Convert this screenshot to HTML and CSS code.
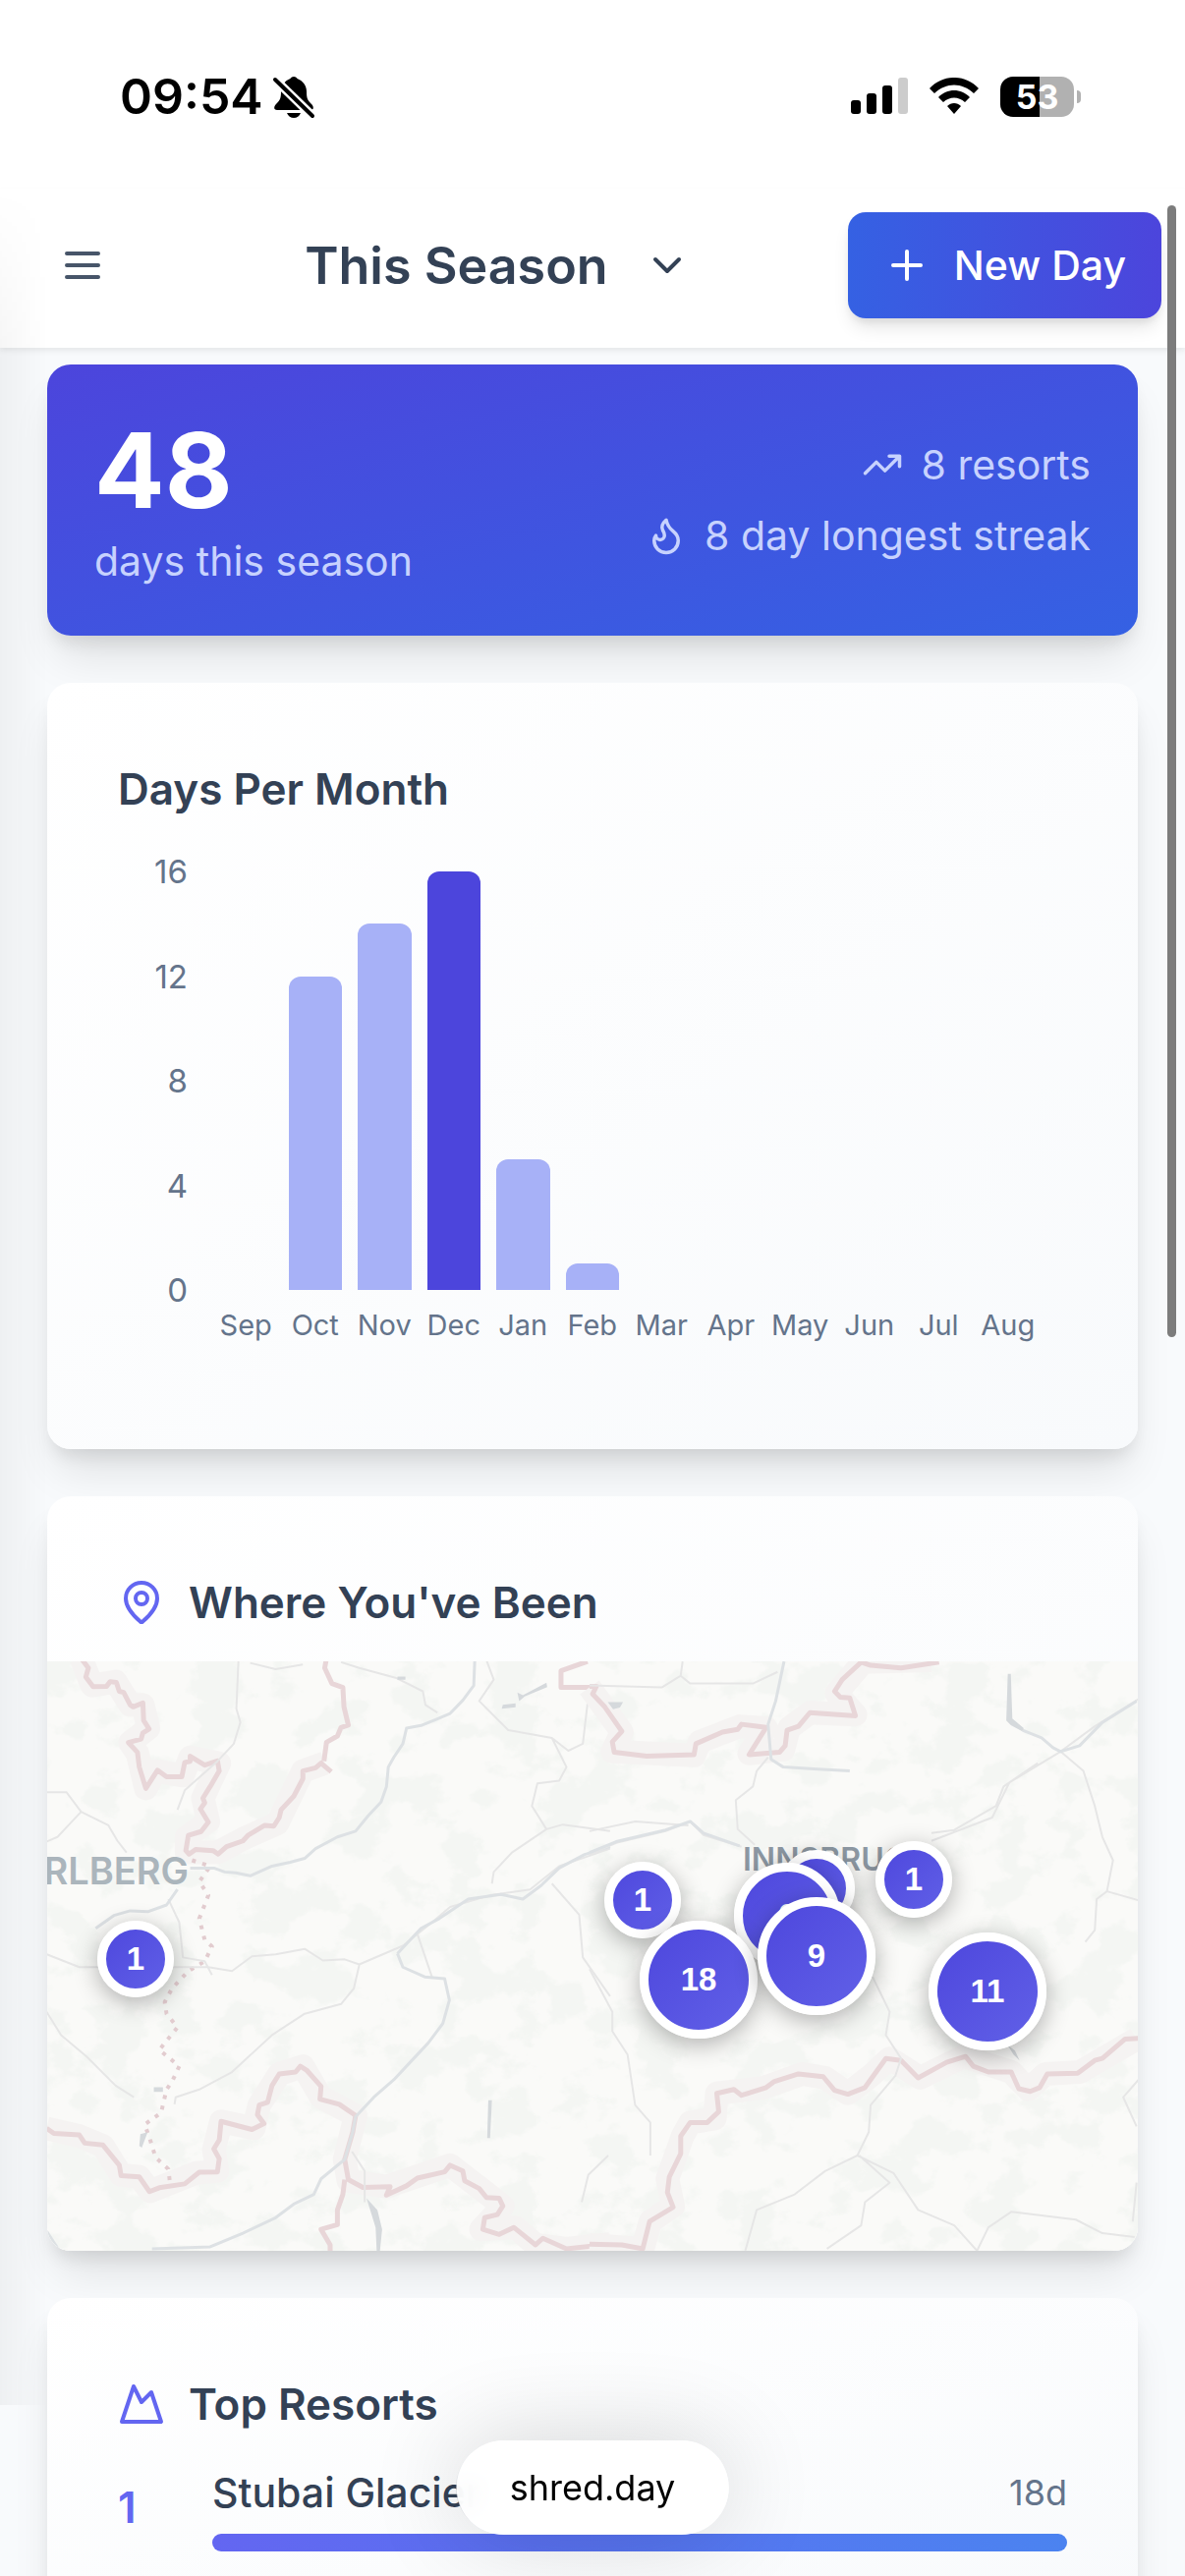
FILE: index.html
```
<!DOCTYPE html>
<html lang="en">
<head>
    <meta charset="UTF-8">
    <meta name="viewport" content="width=device-width, initial-scale=1.0">
    <title>shred.day</title>
    <link rel="stylesheet" href="styles.css">
</head>
<body>
    <div class="status-bar">
        <div class="status-left">
            <span class="clock">09:54</span>
            <svg class="bell" viewBox="0 0 42 42" aria-hidden="true">
                <path d="M21 1c-2 0-3 1-3.500 2C12 5 8 10 8 16c0 7-1 9-5 13-3 3-2 6 1 6h34c3 0 4-3 1-6-4-4-5-6-5-13 0-6-4-11-9.500-13C24 2 23 1 21 1z"/>
                <path d="M14 38h14c-1 3-4 5-7 5s-6-2-7-5z"/>
                <path class="bell-gap" d="M2 4l38 37"/>
                <path class="bell-slash" d="M2 4l38 37"/>
            </svg>
        </div>
        <div class="status-right">
            <svg class="signal" viewBox="0 0 58 38" aria-hidden="true">
                <rect x="0" y="23" width="10" height="14" rx="3"/>
                <rect x="16" y="16" width="10" height="21" rx="3"/>
                <rect x="32" y="8" width="10" height="29" rx="3"/>
                <rect class="dim" x="48" y="0" width="10" height="37" rx="3"/>
            </svg>
            <svg class="wifi" viewBox="0 0 50 38" aria-hidden="true">
                <path d="M0 11C14-3.700 36-3.700 50 11l-5 5C33 4.500 17 4.500 5 16z"/>
                <path d="M9 20c9-9.300 23-9.300 32 0l-5 5c-6.500-6-15.500-6-22 0z"/>
                <path d="M18 29c4-4 10-4 14 0l-7 8z"/>
            </svg>
            <div class="battery"><span>53</span></div>
        </div>
    </div>

    <header class="topbar">
        <button class="icon-button" aria-label="Menu">
            <svg class="icon" viewBox="0 0 24 24"><path d="M4 6h16M4 12h16M4 18h16"/></svg>
        </button>
        <button class="season">
            This Season
            <svg class="icon" viewBox="0 0 24 24"><path d="M6 9l6 6 6-6"/></svg>
        </button>
        <button class="new-day">
            <svg class="icon" viewBox="0 0 24 24"><path d="M5 12h14M12 5v14"/></svg>
            New Day
        </button>
    </header>

    <main>
        <section class="summary">
            <div>
                <div class="total">48</div>
                <div class="label">days this season</div>
            </div>
            <div class="facts">
                <div class="fact">
                    <svg class="icon" viewBox="0 0 24 24"><path d="M22 7l-8.500 8.500-5-5L2 17M16 7h6v6"/></svg>
                    8 resorts
                </div>
                <div class="fact">
                    <svg class="icon" viewBox="0 0 24 24"><path d="M8.500 14.500A2.500 2.500 0 0 0 11 12c0-1.380-.5-2-1-3-1.072-2.143-.224-4.054 2-6 .5 2.500 2 4.900 4 6.500 2 1.600 3 3.500 3 5.500a7 7 0 1 1-14 0c0-1.153.433-2.294 1-3a2.500 2.500 0 0 0 2.500 2.500z"/></svg>
                    8 day longest streak
                </div>
            </div>
        </section>

        <section class="card months">
            <h2>Days Per Month</h2>
            <div class="chart">
                <div class="y-axis">
                    <span>16</span><span>12</span><span>8</span><span>4</span><span>0</span>
                </div>
                <div class="bars" id="bars"></div>
                <div class="x-axis" id="xAxis"></div>
            </div>
        </section>

        <section class="card places">
            <h2>
                <svg class="icon" viewBox="0 0 24 24"><path d="M20 10c0 4.993-5.539 10.193-7.399 11.799a1 1 0 0 1-1.202 0C9.539 20.193 4 14.993 4 10a8 8 0 0 1 16 0"/><circle cx="12" cy="10" r="3"/></svg>
                Where You've Been
            </h2>
            <div class="map">
                <svg class="terrain" viewBox="0 0 1110 600" preserveAspectRatio="none" aria-hidden="true">
                    <defs>
                        <filter id="relief" x="0" y="0" width="100%" height="100%" color-interpolation-filters="sRGB">
                            <feTurbulence type="fractalNoise" baseFrequency="0.02 0.026" numOctaves="6" seed="4"/>
                            <feColorMatrix values="0 0 0 0 0.957  0 0 0 0 0.965  0 0 0 0 0.953  10 0 0 0 -5"/>
                        </filter>
                    </defs>
                    <rect width="1110" height="600" filter="url(#relief)"/>

                    <!-- western half -->
                    <g transform="translate(-8 -11) scale(.37 .3954)">
                        <g class="border-halo">
                            <path d="M115 20L145 90 210 80 250 140 285 140 300 200 250 237 270 265 293 355 320 310 395 322 415 275 495 290 450 380 465 440 405 480 405 520 490 520 560 485 655 445 725 310 785 290"/>
                            <path d="M20 1230L110 1250 175 1275 225 1350 275 1355 305 1392 430 1345 490 1340 480 1285 500 1212 590 1230 605 1170 660 1090 725 1070 775 1150 870 1197 840 1310 850 1365 955 1380 1050 1350 1130 1325 1200 1375 1275 1430 1215 1490 1310 1485 1365 1530 1450 1540 1570 1528"/>
                        </g>
                        <g class="border">
                            <path d="M115 20L135 45 128 68 148 93 185 92 195 80 212 82 220 105 232 108 250 140 258 145 285 135 287 180 302 202 285 212 280 228 245 237 270 262 275 300 293 355 325 308 350 325 392 325 400 288 415 285 415 272 455 295 490 284 495 310 470 350 450 380 455 392 443 408 465 442 445 466 410 476 403 515 412 524 430 512 478 515 492 524 515 505 560 490 575 475 620 450 645 452 660 430 665 410 700 375 725 330 725 310 760 302 775 290 803 312M790 20L785 45 805 85 835 95 838 145 850 192 830 198 820 220 790 236 783 285"/>
                            <path d="M20 1230L40 1243 110 1247 125 1268 175 1273 220 1325 225 1352 275 1355 303 1393 330 1383 400 1373 440 1343 490 1342 495 1308 480 1283 495 1260 500 1212 585 1233 618 1218 600 1195 605 1170 628 1163 640 1120 660 1090 705 1085 718 1070 735 1080 775 1122 772 1155 825 1168 870 1197 862 1240 840 1310 850 1362 890 1382 965 1380 955 1402 1010 1378 1040 1358 1115 1342 1130 1325 1165 1340 1170 1365 1210 1385 1230 1408 1265 1410 1275 1430 1260 1452 1225 1460 1220 1490 1265 1503 1305 1485 1365 1530 1385 1513 1450 1540 1570 1528M840 1362L835 1400 820 1440 820 1478 775 1490 800 1530 800 1560"/>
                            <path d="M1508 28L1435 52 1435 95 1530 95 1520 115 1560 150 1575 170"/>
                        </g>
                        <path class="district" d="M420 540L470 555 440 595 465 630 440 690 455 745 475 762 455 800 410 825 365 870 345 905 350 935 380 970 330 1028 385 1070 365 1110 350 1130 335 1190 290 1220 305 1260 320 1305 355 1335 360 1375"/>
                        <g class="road">
                            <path d="M20 365L75 365 115 415 190 450 215 490 240 520M115 415L75 455 50 480 20 492M548 20L542 150 553 185 535 240 490 285 400 360 380 410M580 32L650 48 725 36M830 30L880 45 980 70 1055 105 1062 140 1095 160M1230 25L1250 75 1210 130 1290 205 1410 225 1455 258 1495 240 1510 120M1410 225L1450 300 1430 335 1370 342 1355 400 1395 460 1440 448 1570 465M1395 460L1300 520 1250 570 1245 600"/>
                            <path d="M20 782L110 815 465 815 530 825 585 787 650 782 730 768 780 798 840 795 880 808 1000 760 1080 700 1130 660 1240 630 1350 615 1430 555 1570 510M355 640L385 700 395 790 455 800 475 835M880 810L865 870 830 910 730 935 640 990 530 1085 440 1130 375 1150 372 1168M20 930L60 990 130 1045 210 1120 260 1150M1040 730L1080 840M1410 600L1485 680 1495 790 1570 890M860 1290L895 1340 895 1420M1565 1300L1510 1350 1492 1420"/>
                        </g>
                        <g class="river">
                            <path d="M1198 20L1195 90 1165 128 1130 162 1090 178 1050 193 1010 200 1000 240 975 275 960 300 955 350 940 390 905 425 870 465 820 480 760 510 730 535 690 545 640 555 580 580 540 572 510 570 480 560 415 560M155 715L205 682 250 670 300 672 350 655 380 615M985 780L1000 815 1060 840 1115 845 1128 900 1110 960 1070 1010 1020 1060 975 1105 920 1150 870 1200 862 1240 840 1310 775 1360 755 1400 700 1425 650 1460 560 1500 470 1535 310 1540M985 780L1050 715 1100 690 1180 640 1270 628 1330 640 1380 605 1430 560 1500 525 1570 505"/>
                            <path d="M20 1495L55 1545"/>
                        </g>
                        <path class="lake" d="M1315 108L1330 115 1395 83 1397 94 1335 118 1320 130zM1275 140l35-4v10l-38 4zM1235 1158l10 0-5 97-8 0zM900 1410l30 30 13 50-6 55h-9l-3-60zM278 1245l20-5-16 40-7-5zM315 1124h25v12h-25zM985 67h22v8h-22z"/>
                    </g>

                    <!-- eastern half -->
                    <g transform="translate(552 -11) scale(.3866 .3954)">
                        <g class="border-halo">
                            <path d="M0 95L85 210 60 260 275 270 290 235 395 195 465 200 420 265 510 255 525 200 580 160 700 165 650 110 720 30 900 25"/>
                            <path d="M0 1530L140 1540 160 1470 220 1430 205 1360 245 1250 265 1215 330 1205 335 1140 460 1125 560 1090 620 1100 680 1140 740 1095 790 1050 870 1100 985 1045 1110 1085 1155 1130 1200 1090 1290 1085 1440 1000"/>
                        </g>
                        <g class="border">
                            <path d="M0 92L18 92 8 112 40 145 85 208 60 235 65 262 150 272 275 268 280 240 350 210 390 203 400 190 465 198 420 268 500 262 515 245 520 205 550 195 580 160 700 168 685 122 660 120 645 105 665 75 715 30 740 38 820 45 920 30"/>
                            <path d="M0 1528L85 1530 140 1540 158 1470 220 1433 205 1395 210 1355 240 1295 240 1250 265 1215 310 1215 340 1187 335 1140 380 1130 400 1145 465 1125 485 1110 550 1090 615 1097 645 1132 680 1142 725 1125 780 1050 820 1055 865 1100 940 1060 990 1045 1010 1070 1050 1085 1110 1085 1130 1128 1160 1135 1185 1125 1205 1090 1285 1088 1330 1055 1350 1050 1410 1000 1445 998"/>
                        </g>
                        <g class="road">
                            <path d="M0 90L190 95 240 65 245 28M240 65L265 85 430 85 495 55M470 275L440 310 430 350 385 385 390 460 435 500M0 465L120 440 260 450M0 525L70 495 200 465 265 440 300 475 400 505M900 490L1060 430 1105 340 1240 260 1330 195 1445 125M900 470L960 462 1070 400 1090 350 1180 290M1240 260L1300 310 1330 400 1350 480 1378 540 1362 620 1335 640 1330 720 1305 750M1362 620L1445 643"/>
                            <path d="M745 840L790 930 780 990 820 1050 805 1095 740 1170 735 1240 705 1300 800 1345 865 1440 960 1480 1020 1545M705 1300L620 1340 540 1400 440 1440 410 1545M710 1300L790 1370 725 1420 715 1480 625 1540M1020 1545L1050 1485 1110 1445 1280 1465 1350 1500 1435 1510M1445 1105L1405 1150 1440 1225M1440 1370L1430 1470M0 820L60 930 60 980 100 1040 120 1170 160 1215 160 1300"/>
                        </g>
                        <path class="river" d="M512 28L490 130 470 190 478 280 510 300 590 305 685 310M1140 205L1190 225 1220 250 1240 260 1290 245 1350 185 1440 130M0 520L70 492 200 462 265 440 300 470 395 503"/>
                        <path class="lake" d="M1101 60l8 0 4 115 30 25-4 8-30-16-12-12zM48 133l40 0-8 14-18 4zM1100 1015l20 15 12 25-16-15z"/>
                    </g>
                    <text class="region" x="144" y="227">VORARLBERG</text>
                    <text class="city" x="708" y="213">INNSBRUCK</text>
                </svg>
                <div id="markers"></div>
            </div>
        </section>

        <section class="card resorts">
            <h2>
                <svg class="icon" viewBox="0 0 24 24"><path d="M8 3l4 8 5-5 5 15H2L8 3z"/></svg>
                Top Resorts
            </h2>
            <div class="resort">
                <span class="rank">1</span>
                <div class="resort-info">
                    <div class="resort-row">
                        <span class="resort-name">Stubai Glacier</span>
                        <span class="resort-days">18d</span>
                    </div>
                    <div class="resort-bar"></div>
                </div>
            </div>
        </section>
    </main>

    <div class="edge-shadow"></div>
    <div class="scroll-thumb"></div>
    <a class="address" href="#">shred.day</a>

    <script>
        const months = [
            ['Sep', 0], ['Oct', 12], ['Nov', 14], ['Dec', 16], ['Jan', 5], ['Feb', 1],
            ['Mar', 0], ['Apr', 0], ['May', 0], ['Jun', 0], ['Jul', 0], ['Aug', 0]
        ];
        const max = 16;

        months.forEach(([name, days]) => {
            const bar = document.createElement('div');
            bar.className = days === max ? 'bar best' : 'bar';
            bar.style.height = (days / max * 100) + '%';
            document.getElementById('bars').appendChild(bar);

            const label = document.createElement('span');
            label.textContent = name;
            document.getElementById('xAxis').appendChild(label);
        });

        // map position (x, y on a 1110 x 600 map) and number of days
        const resorts = [
            [90, 303, 1], [783, 231, 1], [606, 243, 1], [753, 259, 6],
            [882, 222, 1], [663, 324, 18], [783, 300, 9], [957, 336, 11]
        ];

        resorts.forEach(([x, y, days]) => {
            const marker = document.createElement('div');
            marker.className = 'marker' + (days > 8 ? ' large' : days > 4 ? ' medium' : '');
            marker.style.left = (x / 1110 * 100) + '%';
            marker.style.top = (y / 600 * 100) + '%';
            marker.textContent = days;
            document.getElementById('markers').appendChild(marker);
        });
    </script>
</body>
</html>
```
FILE: styles.css
```
* { box-sizing: border-box; }
body { margin: 0; height: 100vh; overflow: hidden; background: #f8fafc; color: #334155; font-family: Inter, "Liberation Sans", sans-serif; font-size: 41px; }
button { border: none; background: none; padding: 0; font: inherit; color: inherit; cursor: pointer; }
h2 { display: flex; align-items: center; gap: 24px; margin: 0; font-size: 44px; font-weight: 600; line-height: 72px; }
.icon { width: 48px; height: 48px; flex: none; fill: none; stroke: currentColor; stroke-width: 2; stroke-linecap: round; stroke-linejoin: round; }

/* status bar */
.status-bar { display: flex; justify-content: space-between; align-items: center; height: 192px; padding: 4px 113px 0 122px; background: #fff; color: #000; }
.status-left, .status-right { display: flex; align-items: center; }
.status-left { gap: 10px; }
.status-right { gap: 22px; }
.clock { font-size: 50px; font-weight: 600; }
.bell { width: 42px; height: 44px; overflow: visible; }
.bell-gap { stroke: #fff; stroke-width: 9; }
.bell-slash { stroke: #000; stroke-width: 4; stroke-linecap: round; }
.signal { width: 58px; height: 38px; }
.signal .dim { fill: #ccc; }
.wifi { width: 50px; height: 38px; }
.battery { position: relative; display: flex; align-items: center; justify-content: center; width: 75px; height: 41px; border-radius: 13px; background: linear-gradient(90deg, #000 53%, #b1b1b1 53%); color: #fff; font-size: 34px; font-weight: 700; }
.battery::after { content: ""; position: absolute; left: 78px; top: 14px; width: 4px; height: 13px; border-radius: 0 4px 4px 0; background: #b1b1b1; }

/* top bar */
.topbar { position: relative; display: flex; justify-content: space-between; align-items: center; height: 162px; padding: 0 24px 6px 60px; background: #fff; box-shadow: 0 3px 6px rgba(0, 0, 0, 0.08); }
.icon-button { display: flex; color: #475569; }
.season { display: flex; align-items: center; gap: 36px; margin-left: 42px; font-size: 52px; font-weight: 600; }
.new-day { display: flex; align-items: center; gap: 24px; height: 108px; padding: 0 36px; border-radius: 18px; background: linear-gradient(90deg, #3561e3, #4c45dc); color: #fff; font-weight: 500; box-shadow: 0 12px 18px -3px rgba(0, 0, 0, 0.1), 0 6px 9px -3px rgba(0, 0, 0, 0.08); }

main { display: flex; flex-direction: column; gap: 48px; padding: 17px 48px 0; }

/* season summary */
.summary { display: flex; justify-content: space-between; align-items: center; height: 276px; padding: 0 48px; border-radius: 24px; background: linear-gradient(to bottom right, #4c45dc, #3561e3); color: #c7d2fe; box-shadow: 0 30px 45px -9px rgba(0, 0, 0, 0.1), 0 12px 18px -6px rgba(0, 0, 0, 0.1); }
.total { padding-top: 8px; color: #fff; font-size: 106px; font-weight: 700; line-height: 108px; }
.label { padding-top: 8px; line-height: 60px; }
.facts { display: flex; flex-direction: column; align-items: flex-end; gap: 12px; }
.fact { display: flex; align-items: center; gap: 18px; line-height: 60px; }
.fact .icon { width: 42px; height: 42px; }

/* cards */
.card { flex: none; border-radius: 24px; background: linear-gradient(to bottom right, #fff, #f8fafc); box-shadow: 0 30px 45px -9px rgba(0, 0, 0, 0.1), 0 12px 18px -6px rgba(0, 0, 0, 0.1); }
.card h2 .icon { color: #6366f1; }

/* days per month */
.months { height: 780px; padding: 72px; }
.chart { display: grid; grid-template-columns: 71px 1fr; column-gap: 24px; margin: 48px 25px 0 0; color: #64748b; }
.y-axis { display: flex; flex-direction: column; justify-content: space-between; align-items: flex-end; margin: -20px 0; font-size: 33px; line-height: 40px; }
.bars, .x-axis { display: grid; grid-template-columns: repeat(12, 1fr); }
.bars { align-items: end; height: 426px; }
.bar { margin: 0 8px; border-radius: 12px 12px 0 0; background: #a7b1f7; }
.bar.best { background: #4c45dc; }
.x-axis { grid-column: 2; padding-top: 16px; font-size: 29px; line-height: 40px; text-align: center; }

/* map */
.places { overflow: hidden; }
.places h2 { padding: 72px 72px 24px; }
.map { position: relative; height: 600px; background: #fafaf8; overflow: hidden; }
.terrain { display: block; width: 100%; height: 100%; }
.terrain path { fill: none; stroke-linejoin: round; vector-effect: non-scaling-stroke; }
.border path { stroke: #e8d6d8; stroke-width: 5; }
.border-halo path { stroke: #f5f3f2; stroke-width: 24; }
.terrain .district { stroke: #e2cccf; stroke-width: 4; stroke-dasharray: 4 7; }
.road path { stroke: #e6e6e6; stroke-width: 2; }
.river path, .terrain .river { stroke: #dde1e4; stroke-width: 3; }
.terrain .lake { fill: #d5d9dc; }
.region { fill: #abb5bc; font-size: 38px; font-weight: 600; text-anchor: end; }
.city { fill: #8d98a3; font-size: 32px; font-weight: 600; }
.marker { position: absolute; display: flex; align-items: center; justify-content: center; width: 78px; height: 78px; border: 9px solid #fff; border-radius: 50%; transform: translate(-50%, -50%); background: linear-gradient(135deg, #4c45dc, #6262e8) border-box; color: #fff; font: bold 33px "Liberation Sans", sans-serif; box-shadow: 0 6px 24px rgba(0, 0, 0, 0.3); }
.marker.medium { width: 108px; height: 108px; }
.marker.large { width: 120px; height: 120px; }

/* top resorts */
.resorts { padding: 72px; }
.resort { display: flex; align-items: center; margin-top: 24px; }
.rank { width: 96px; color: #6366f1; font-size: 44px; font-weight: 600; }
.resort-info { flex: 1; }
.resort-row { display: flex; justify-content: space-between; align-items: center; line-height: 60px; }
.resort-name { font-weight: 500; }
.resort-days { color: #64748b; font-size: 36px; }
.resort-bar { height: 18px; margin-top: 12px; border-radius: 9px; background: linear-gradient(90deg, #6366f1, #4b83f0); }

/* floating bits */
.edge-shadow { position: fixed; left: 0; top: 192px; bottom: 174px; width: 48px; background: linear-gradient(90deg, rgba(0, 0, 0, 0.04), transparent); mask-image: linear-gradient(transparent, #000 180px); }
.scroll-thumb { position: fixed; right: 9px; top: 209px; width: 9px; height: 1152px; border-radius: 5px; background: #7c7c7c; }
.address { position: fixed; left: 50%; bottom: 42px; transform: translateX(-50%); padding: 0 54px; border-radius: 48px; background: rgba(255, 255, 255, 0.92); backdrop-filter: blur(12px); color: #000; font-size: 36px; line-height: 96px; text-decoration: none; box-shadow: 0 0 96px rgba(0, 0, 0, 0.16); }
```
